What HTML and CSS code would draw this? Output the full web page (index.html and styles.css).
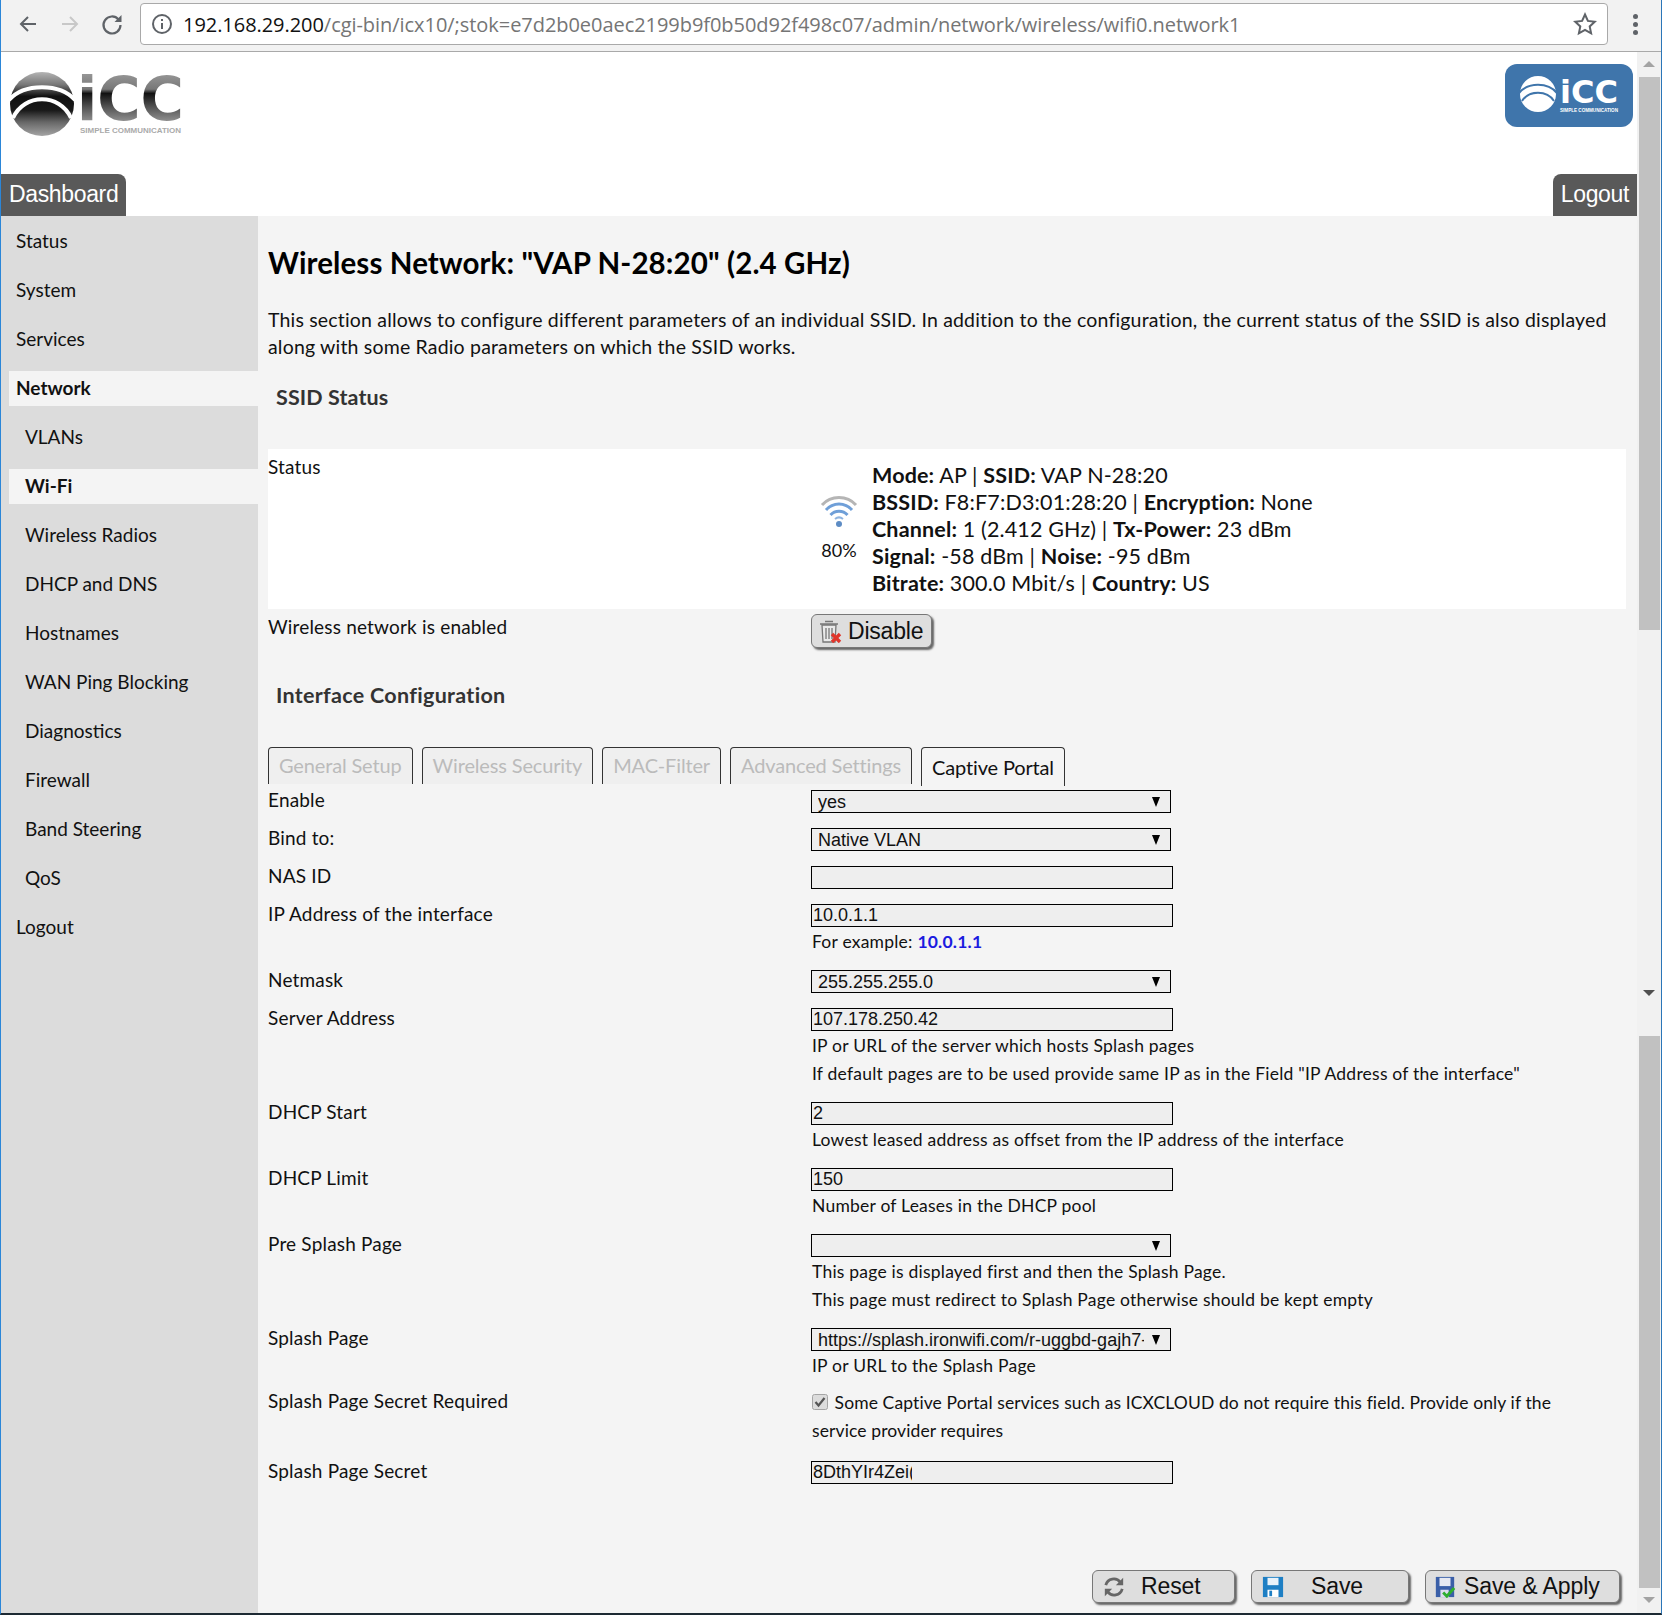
FILE: index.html
```html
<!DOCTYPE html>
<html lang="en">
<head>
    <meta charset="UTF-8">
    <meta name="viewport" content="width=device-width, initial-scale=1.0">
    <title>Wireless Network</title>
    <link rel="stylesheet" href="styles.css">
</head>
<body>
<div class="window">
    <div class="toolbar">
        <svg class="nav-icon" viewBox="0 0 24 24"><path d="M20 12H5M12 5l-7 7 7 7" fill="none" stroke="#5f6368" stroke-width="2"/></svg>
        <svg class="nav-icon" viewBox="0 0 24 24"><path d="M4 12h15M12 5l7 7-7 7" fill="none" stroke="#c8c8c8" stroke-width="2"/></svg>
        <svg class="nav-icon" viewBox="0 0 24 24"><path d="M18.5 7.5A8.5 8.5 0 1 0 20.5 13" fill="none" stroke="#5f6368" stroke-width="2.2"/><path d="M21.5 3v7h-7z" fill="#5f6368"/></svg>
        <div class="address">
            <svg class="info-icon" viewBox="0 0 22 22"><circle cx="11" cy="11" r="9" fill="none" stroke="#5f6368" stroke-width="2"/><path d="M10 10h2v6h-2zM10 6h2v2h-2z" fill="#5f6368"/></svg>
            <span class="url"><span class="host">192.168.29.200</span>/cgi-bin/icx10/;stok=e7d2b0e0aec2199b9f0b50d92f498c07/admin/network/wireless/wifi0.network1</span>
            <svg class="star-icon" viewBox="0 0 24 24"><path d="M12 2.5l2.9 6.4 6.9.8-5.1 4.7 1.4 6.9-6.1-3.5-6.1 3.5 1.4-6.9-5.1-4.7 6.9-.8z" fill="none" stroke="#5f6368" stroke-width="2"/></svg>
        </div>
        <div class="menu-dots"><i></i><i></i><i></i></div>
    </div>

    <div class="viewport">
        <div class="page">
            <div class="header">
                <div class="header-top">
                    <svg class="logo" viewBox="0 0 172 66">
                        <defs>
                            <linearGradient id="ball" x1="0" y1="0" x2="0" y2="1">
                                <stop offset="0" stop-color="#b4b4b4"/><stop offset=".2" stop-color="#777"/><stop offset=".38" stop-color="#111"/><stop offset=".6" stop-color="#1a1a1a"/><stop offset=".78" stop-color="#666"/><stop offset="1" stop-color="#a4a4a4"/>
                            </linearGradient>
                            <linearGradient id="word" x1="0" y1="0" x2="0" y2="1">
                                <stop offset="0" stop-color="#aaa"/><stop offset=".36" stop-color="#777"/><stop offset=".42" stop-color="#111"/><stop offset=".62" stop-color="#555"/><stop offset=".85" stop-color="#999"/>
                            </linearGradient>
                        </defs>
                        <circle cx="32" cy="33" r="32" fill="url(#ball)"/>
                        <path d="M-1 29C14 12 50 12 65 29M3 47C14 22 50 22 61 47" fill="none" stroke="#fff" stroke-width="4"/>
                        <text x="67" y="49" class="logo-word" fill="url(#word)" textLength="107" lengthAdjust="spacingAndGlyphs">iCC</text>
                        <text x="70" y="62" class="logo-tag" textLength="101" lengthAdjust="spacingAndGlyphs">SIMPLE COMMUNICATION</text>
                    </svg>
                    <div class="badge">
                        <svg class="badge-logo" viewBox="0 -6 100 46">
                            <circle cx="18" cy="18" r="18" fill="#fff"/>
                            <path d="M-1 17C8 6 28 6 37 17M2 25C9 14 27 14 34 25" fill="none" stroke="#3f75ab" stroke-width="2"/>
                            <text x="40" y="27" class="badge-word" textLength="58" lengthAdjust="spacingAndGlyphs">iCC</text>
                            <text x="40" y="36" class="badge-tag" textLength="58" lengthAdjust="spacingAndGlyphs">SIMPLE COMMUNICATION</text>
                        </svg>
                    </div>
                </div>
                <div class="header-tabs">
                    <a class="top-tab dash">Dashboard</a>
                    <a class="top-tab out">Logout</a>
                </div>
            </div>

            <div class="columns">
                <div class="sidebar">
                    <div class="side-item">Status</div>
                    <div class="side-item">System</div>
                    <div class="side-item">Services</div>
                    <div class="side-item active">Network</div>
                    <div class="side-item sub">VLANs</div>
                    <div class="side-item sub active">Wi-Fi</div>
                    <div class="side-item sub">Wireless Radios</div>
                    <div class="side-item sub">DHCP and DNS</div>
                    <div class="side-item sub">Hostnames</div>
                    <div class="side-item sub">WAN Ping Blocking</div>
                    <div class="side-item sub">Diagnostics</div>
                    <div class="side-item sub">Firewall</div>
                    <div class="side-item sub">Band Steering</div>
                    <div class="side-item sub">QoS</div>
                    <div class="side-item">Logout</div>
                </div>

                <div class="main">
                    <h1>Wireless Network: "VAP N-28:20" (2.4 GHz)</h1>
                    <p class="intro">This section allows to configure different parameters of an individual SSID. In addition to the configuration, the current status of the SSID is also displayed along with some Radio parameters on which the SSID works.</p>

                    <h2 class="first">SSID Status</h2>
                    <div class="status-box">
                        <div class="label">Status</div>
                        <div class="status-wifi">
                            <svg class="wifi-icon" viewBox="0 0 38 34">
                                <path d="M2 11C11 1 27 1 36 11" fill="none" stroke="#b5b5b5" stroke-width="3"/>
                                <path d="M6 16C13 8 25 8 32 16" fill="none" stroke="#6f9fd8" stroke-width="3"/>
                                <path d="M10.5 21C15 16 23 16 27.5 21" fill="none" stroke="#6f9fd8" stroke-width="3"/>
                                <circle cx="19" cy="30" r="3" fill="#5d8cc4"/>
                                <path d="M15 25c2.5-2 5.5-2 8 0" fill="none" stroke="#8fb4e0" stroke-width="2"/>
                            </svg>
                            <span class="wifi-pct">80%</span>
                        </div>
                        <div class="status-info">
                            <div><b>Mode:</b> AP | <b>SSID:</b> VAP N-28:20</div>
                            <div><b>BSSID:</b> F8:F7:D3:01:28:20 | <b>Encryption:</b> None</div>
                            <div><b>Channel:</b> 1 (2.412 GHz) | <b>Tx-Power:</b> 23 dBm</div>
                            <div><b>Signal:</b> -58 dBm | <b>Noise:</b> -95 dBm</div>
                            <div><b>Bitrate:</b> 300.0 Mbit/s | <b>Country:</b> US</div>
                        </div>
                    </div>

                    <div class="enable-row">
                        <div class="label">Wireless network is enabled</div>
                        <button class="btn btn-disable">
                            <svg class="btn-icon trash" viewBox="0 0 24 24">
                                <path d="M4 6h14l-1 17H5z" fill="#e9e9e9" stroke="#777" stroke-width="1.3"/>
                                <path d="M2 5h18M7 2.5h8M8 9v11M11 9v11M14 9v11" fill="none" stroke="#777" stroke-width="1.3"/>
                                <path d="M14 15l8 8M22 15l-8 8" stroke="#e0352b" stroke-width="3.4"/>
                            </svg>
                            Disable
                        </button>
                    </div>

                    <h2 class="second">Interface Configuration</h2>

                    <div class="tabs">
                        <div class="tab">General Setup</div>
                        <div class="tab">Wireless Security</div>
                        <div class="tab">MAC-Filter</div>
                        <div class="tab">Advanced Settings</div>
                        <div class="tab current">Captive Portal</div>
                    </div>

                    <div class="form">
                        <div class="row">
                            <div class="label">Enable</div>
                            <div class="field"><div class="select-wrap"><select><option>yes</option></select></div></div>
                        </div>
                        <div class="row">
                            <div class="label">Bind to:</div>
                            <div class="field"><div class="select-wrap"><select><option>Native VLAN</option></select></div></div>
                        </div>
                        <div class="row">
                            <div class="label">NAS ID</div>
                            <div class="field"><input type="text" value=""></div>
                        </div>
                        <div class="row">
                            <div class="label">IP Address of the interface</div>
                            <div class="field">
                                <input type="text" value="10.0.1.1">
                                <div class="hint">For example: <b class="example">10.0.1.1</b></div>
                            </div>
                        </div>
                        <div class="row">
                            <div class="label">Netmask</div>
                            <div class="field"><div class="select-wrap"><select><option>255.255.255.0</option></select></div></div>
                        </div>
                        <div class="row">
                            <div class="label">Server Address</div>
                            <div class="field">
                                <input type="text" value="107.178.250.42">
                                <div class="hint">IP or URL of the server which hosts Splash pages</div>
                                <div class="hint">If default pages are to be used provide same IP as in the Field "IP Address of the interface"</div>
                            </div>
                        </div>
                        <div class="row">
                            <div class="label">DHCP Start</div>
                            <div class="field">
                                <input type="text" value="2">
                                <div class="hint">Lowest leased address as offset from the IP address of the interface</div>
                            </div>
                        </div>
                        <div class="row">
                            <div class="label">DHCP Limit</div>
                            <div class="field">
                                <input type="text" value="150">
                                <div class="hint">Number of Leases in the DHCP pool</div>
                            </div>
                        </div>
                        <div class="row">
                            <div class="label">Pre Splash Page</div>
                            <div class="field">
                                <div class="select-wrap"><select><option></option></select></div>
                                <div class="hint">This page is displayed first and then the Splash Page.</div>
                                <div class="hint">This page must redirect to Splash Page otherwise should be kept empty</div>
                            </div>
                        </div>
                        <div class="row">
                            <div class="label">Splash Page</div>
                            <div class="field">
                                <div class="select-wrap"><select><option>https://splash.ironwifi.com/r-uggbd-gajh7-xxxxxxxx</option></select></div>
                                <div class="hint">IP or URL to the Splash Page</div>
                            </div>
                        </div>
                        <div class="row check-row">
                            <div class="label">Splash Page Secret Required</div>
                            <div class="field">
                                <div class="hint check-hint"><svg class="check" viewBox="0 0 16 16"><rect x=".5" y=".5" width="15" height="15" rx="2" fill="#dcdcdc" stroke="#a5a5a5"/><path d="M3.5 8l3 3.5 6-7.5" fill="none" stroke="#555" stroke-width="2.2"/></svg> Some Captive Portal services such as ICXCLOUD do not require this field. Provide only if the service provider requires</div>
                            </div>
                        </div>
                        <div class="row">
                            <div class="label">Splash Page Secret</div>
                            <div class="field"><input type="text" class="clipped" value="8DthYIr4Zei(xxxxxxxxxxxxxxxxxxxxxxx"></div>
                        </div>
                    </div>

                    <div class="actions">
                        <button class="btn btn-reset">
                            <svg class="btn-icon" viewBox="0 0 24 24">
                                <path d="M3 10a9 9 0 0 1 16-3M21 14a9 9 0 0 1-16 3" fill="none" stroke="#666" stroke-width="3"/>
                                <path d="M22 2v8h-8zM2 22v-8h8z" fill="#666"/>
                            </svg>
                            <span>Reset</span>
                        </button>
                        <button class="btn btn-save">
                            <svg class="btn-icon" viewBox="0 0 24 24">
                                <path d="M1 1h22v22H1z" fill="#1e7fc4"/>
                                <path d="M6 2h12v8H6z" fill="#e8f2fa"/>
                                <path d="M6 15h12v8H6z" fill="#fff"/>
                                <path d="M8 16h3v6H8z" fill="#1e7fc4"/>
                            </svg>
                            <span>Save</span>
                        </button>
                        <button class="btn btn-apply">
                            <svg class="btn-icon" viewBox="0 0 24 24">
                                <path d="M2 1h20v22H2z" fill="#3a5fa8"/>
                                <path d="M6 2h12v9H6z" fill="#e6e9f2"/>
                                <path d="M7 15h9v8H7z" fill="#dde"/>
                                <path d="M10 18l4 4 8-9" fill="none" stroke="#2fae2f" stroke-width="3.2"/>
                            </svg>
                            <span>Save &amp; Apply</span>
                        </button>
                    </div>
                </div>
            </div>
        </div>

        <div class="rail">
            <div class="rail-arrow up"></div>
            <div class="thumb top"></div>
            <div class="rail-arrow down dark"></div>
            <div class="thumb bottom"></div>
            <div class="rail-arrow down"></div>
        </div>
    </div>
</div>
</body>
</html>
```

FILE: styles.css
```css
* {
    box-sizing: border-box;
}
html, body {
    margin: 0;
    padding: 0;
}
body {
    font-family: Lato, "Open Sans", sans-serif;
    color: #111;
}
.window {
    width: 1662px;
    height: 1615px;
    display: flex;
    flex-direction: column;
    overflow: hidden;
    border-left: 1px solid #2b86d8;
    border-right: 1px solid #2b76b8;
    border-bottom: 2px solid #1d2a33;
}

/* browser bar */
.toolbar {
    height: 52px;
    flex: none;
    display: flex;
    align-items: center;
    background: #f2f2f2;
    border-bottom: 1px solid #a9a9a9;
    padding: 0 0 3px 15px;
}
.nav-icon {
    width: 24px;
    height: 24px;
    margin-right: 18px;
}
.address {
    width: 1468px;
    height: 42px;
    margin-left: -2px;
    display: flex;
    align-items: center;
    background: #fff;
    border: 1px solid #a9a9a9;
    border-radius: 4px;
    padding: 0 10px;
}
.info-icon {
    width: 22px;
    height: 22px;
    margin-right: 10px;
}
.url {
    flex: 1;
    font-family: "Open Sans", sans-serif;
    font-size: 20px;
    letter-spacing: -0.05px;
    color: #757575;
    white-space: nowrap;
}
.host {
    color: #111;
}
.star-icon {
    width: 24px;
    height: 24px;
}
.menu-dots {
    margin-left: 25px;
    display: flex;
    flex-direction: column;
    gap: 3px;
}
.menu-dots i {
    width: 5px;
    height: 5px;
    border-radius: 50%;
    background: #5f6368;
}

.viewport {
    flex: 1;
    display: flex;
    min-height: 0;
}
.page {
    width: 1636px;
    display: flex;
    flex-direction: column;
}

/* header */
.header {
    height: 164px;
    flex: none;
    display: flex;
    flex-direction: column;
    background: #fff;
}
.header-top {
    height: 122px;
    display: flex;
    justify-content: space-between;
    padding: 19px 4px 0 9px;
}
.logo {
    width: 172px;
    height: 66px;
    overflow: visible;
}
.logo-word {
    font-family: "DejaVu Sans", sans-serif;
    font-weight: bold;
    font-size: 60px;
}
.logo-tag {
    font-family: "Liberation Sans", sans-serif;
    font-weight: bold;
    font-size: 7px;
    fill: #aaa;
}
.badge {
    width: 128px;
    height: 63px;
    margin-top: -7px;
    padding: 6px 0 0 15px;
    background: #3f75ab;
    border-radius: 12px;
}
.badge-logo {
    display: block;
    width: 100px;
    height: 46px;
    overflow: visible;
}
.badge-word {
    font-family: "DejaVu Sans", sans-serif;
    font-weight: bold;
    font-size: 32px;
    fill: #fff;
}
.badge-tag {
    font-family: "Liberation Sans", sans-serif;
    font-weight: bold;
    font-size: 5px;
    fill: #fff;
}
.header-tabs {
    height: 42px;
    display: flex;
    justify-content: space-between;
}
.top-tab {
    display: block;
    background: #595959;
    color: #fff;
    font-family: "Liberation Sans", sans-serif;
    font-size: 23px;
    letter-spacing: -0.35px;
    line-height: 40px;
    padding: 0 8px;
}
.top-tab.dash {
    border-top-right-radius: 8px;
}
.top-tab.out {
    border-top-left-radius: 8px;
}

.columns {
    flex: 1;
    display: flex;
    min-height: 0;
}

/* left menu */
.sidebar {
    width: 257px;
    flex: none;
    background: #dcdcdc;
    padding-top: 8px;
    font-size: 19px;
}
.side-item {
    height: 35px;
    margin-bottom: 14px;
    margin-left: 8px;
    padding-left: 7px;
    line-height: 34px;
}
.side-item.sub {
    padding-left: 16px;
}
.side-item.active {
    background: #f4f4f4;
    font-weight: bold;
}

/* content */
.main {
    flex: 1;
    background: #f4f4f4;
    padding: 30px 11px 0 10px;
    font-size: 19px;
}
h1 {
    margin: 0;
    font-size: 29.5px;
    line-height: 34px;
    font-weight: bold;
    letter-spacing: 0.1px;
    color: #000;
}
.intro {
    margin: 26px 0 0;
    line-height: 27px;
    font-size: 19.5px;
    letter-spacing: 0.18px;
}
h2 {
    margin: 0;
    padding-left: 8px;
    font-size: 21.5px;
    line-height: 28px;
    font-weight: bold;
    letter-spacing: 0.1px;
    color: #333;
}
h2.first {
    margin-top: 23px;
}
h2.second {
    margin-top: 33px;
    letter-spacing: 0.3px;
}
.label {
    width: 543px;
    flex: none;
    margin-top: -2px;
    line-height: 23px;
    letter-spacing: 0.18px;
}
.status-box {
    height: 160px;
    margin-top: 38px;
    display: flex;
    background: #fff;
    padding-top: 8px;
}
.status-wifi {
    width: 61px;
    flex: none;
    display: flex;
    flex-direction: column;
    align-items: center;
    padding: 37px 5px 0 0;
}
.wifi-icon {
    width: 38px;
    height: 34px;
}
.wifi-pct {
    margin-top: 11px;
    font-size: 18px;
    line-height: 22px;
}
.status-info {
    padding-top: 5px;
    font-size: 21.5px;
    line-height: 27px;
    letter-spacing: 0.15px;
}
.enable-row {
    display: flex;
    margin-top: 5px;
    line-height: 23px;
}
.enable-row .label {
    margin-top: 0;
    padding-top: 1px;
}
.btn {
    display: flex;
    align-items: center;
    height: 33px;
    background: #dedede;
    border: 1px solid #777;
    border-radius: 6px;
    box-shadow: 2px 2px 2px #666;
    font-family: "Liberation Sans", sans-serif;
    font-size: 23px;
    letter-spacing: -0.1px;
    color: #111;
    padding: 0;
}
.btn-icon {
    width: 22px;
    height: 22px;
    flex: none;
}
.btn-icon.trash {
    width: 24px;
    height: 24px;
}
.btn-disable {
    width: 121px;
    height: 34px;
    padding-left: 6px;
    gap: 6px;
    letter-spacing: -0.2px;
}

/* tabs */
.tabs {
    display: flex;
    align-items: flex-start;
    gap: 9px;
    height: 38px;
    margin-top: 38px;
    font-size: 20px;
    letter-spacing: -0.15px;
}
.tab {
    height: 37px;
    padding: 0 10px;
    line-height: 34px;
    color: #bbb;
    background: #efefef;
    border: 1px solid #333;
    border-bottom: none;
    border-radius: 4px 4px 0 0;
}
.tab.current {
    height: 39px;
    line-height: 39px;
    color: #111;
    background: #f4f4f4;
}

/* form */
.form {
    margin-top: 5px;
    display: flex;
    flex-direction: column;
}
.row {
    display: flex;
    margin-bottom: 15px;
}
.row.check-row {
    margin-top: -3px;
    margin-bottom: 17px;
}
.field {
    flex: 1;
    min-width: 0;
}
input[type="text"] {
    display: block;
    width: 362px;
    height: 23px;
    padding: 0 1px;
    background: #eee;
    border: 1px solid #000;
    border-radius: 0;
    font-family: "Liberation Sans", sans-serif;
    font-size: 18px;
    color: #111;
}
input.clipped {
    padding-right: 260px;
}
.select-wrap {
    position: relative;
    width: 360px;
    height: 23px;
}
.select-wrap::after {
    content: "";
    position: absolute;
    right: 11px;
    top: 7px;
    border-left: 4px solid transparent;
    border-right: 4px solid transparent;
    border-top: 10px solid #000;
}
select {
    display: block;
    width: 100%;
    height: 23px;
    -webkit-appearance: none;
    appearance: none;
    padding: 0 26px 0 6px;
    background: #eee;
    border: 1px solid #000;
    border-radius: 0;
    font-family: "Liberation Sans", sans-serif;
    font-size: 18px;
    color: #111;
}
.hint {
    margin-left: 1px;
    font-size: 17.5px;
    line-height: 28px;
    letter-spacing: 0.22px;
}
.hint:nth-child(2) {
    margin-top: 1px;
}
.hint:last-child {
    margin-bottom: -1px;
}
.example {
    color: #1b1be0;
}
.check-hint {
    width: 750px;
    margin-top: -2px;
    letter-spacing: 0.11px;
}
.check {
    width: 16px;
    height: 16px;
    margin-right: 2px;
    vertical-align: -1px;
}

/* bottom buttons */
.actions {
    display: flex;
    justify-content: flex-end;
    gap: 16px;
    margin-top: 71px;
    padding-right: 6px;
}
.btn-reset {
    width: 143px;
    padding-left: 10px;
    gap: 16px;
}
.btn-save {
    width: 158px;
    padding-left: 10px;
    gap: 27px;
}
.btn-apply {
    width: 195px;
    padding-left: 8px;
    gap: 8px;
}

/* scroll rail */
.rail {
    flex: 1;
    display: flex;
    flex-direction: column;
    align-items: center;
    background: #f1f1f1;
    padding-top: 9px;
}
.rail-arrow {
    width: 0;
    height: 0;
    border-left: 6px solid transparent;
    border-right: 6px solid transparent;
}
.rail-arrow.up {
    border-bottom: 6px solid #a3a3a3;
    margin-bottom: 10px;
}
.rail-arrow.down {
    border-top: 6px solid #a3a3a3;
}
.rail-arrow.dark {
    border-top-color: #505050;
    margin-top: 360px;
}
.thumb {
    width: 21px;
    background: #c1c1c1;
}
.thumb.top {
    height: 553px;
}
.thumb.bottom {
    height: 552px;
    margin-top: 40px;
    margin-bottom: 9px;
}
```
